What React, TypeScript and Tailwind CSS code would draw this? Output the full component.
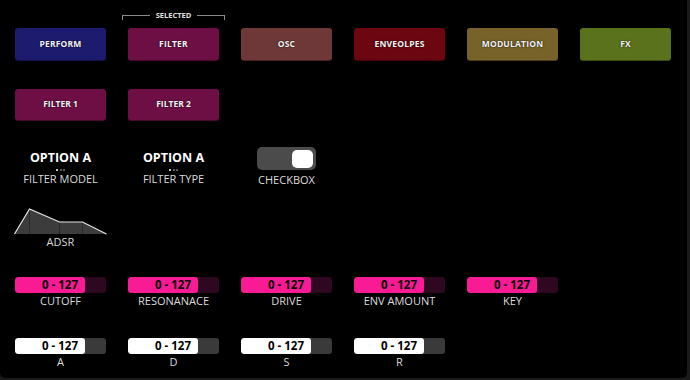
import React from "react";

type Btn = { label: string; color: string; edge: string };

const tabs: Btn[] = [
    { label: "PERFORM", color: "bg-[#1d1b6e]", edge: "shadow-[0_1px_0_#121048]" },
    { label: "FILTER", color: "bg-[#6d0f45]", edge: "shadow-[0_1px_0_#46082c]" },
    { label: "OSC", color: "bg-[#6e3838]", edge: "shadow-[0_1px_0_#482222]" },
    { label: "ENVEOLPES", color: "bg-[#6c0610]", edge: "shadow-[0_1px_0_#46030a]" },
    { label: "MODULATION", color: "bg-[#776229]", edge: "shadow-[0_1px_0_#4e3f18]" },
    { label: "FX", color: "bg-[#5a721b]", edge: "shadow-[0_1px_0_#3a4a10]" },
];

const pinkSliders = ["CUTOFF", "RESONANACE", "DRIVE", "ENV AMOUNT", "KEY"];
const whiteSliders = ["A", "D", "S", "R"];

const Button = ({ label, color, edge }: Btn) => (
    <div
        className={`flex h-[32px] items-center justify-center rounded-[3px] ${color} ${edge} text-[8.5px] font-bold tracking-[0.2px] text-[#f2f2f2] [text-shadow:0_0_2px_rgba(0,0,0,0.9)]`}
    >
        {label}
    </div>
);

const Slider = ({ label, white }: { label: string; white?: boolean }) => (
    <div className="flex flex-col items-center">
        <div
            className={`flex h-[16px] w-full overflow-hidden rounded-[3px] ${
                white ? "bg-[#3a3a3a]" : "bg-[#2e0820]"
            }`}
        >
            <div
                className={`flex w-[70px] items-center justify-end rounded-[3px] pr-[7px] text-[11.5px] font-bold text-black ${
                    white ? "bg-white" : "bg-[#f81b94]"
                }`}
            >
                0 - 127
            </div>
        </div>
        <div className="mt-[1px] text-[11px] leading-[14px] text-[#dcdcdc]">{label}</div>
    </div>
);

const Option = ({ label }: { label: string }) => (
    <div className="flex flex-col items-center pt-[3px]">
        <div className="text-[12.5px] font-bold leading-[16px] text-white">OPTION A</div>
        <div className="mt-[3px] flex gap-[1.5px]">
            <span className="h-[2px] w-[2px] rounded-full bg-white" />
            <span className="h-[2px] w-[2px] rounded-full bg-[#777]" />
            <span className="h-[2px] w-[2px] rounded-full bg-[#777]" />
        </div>
        <div className="mt-[1px] text-[11px] leading-[14px] text-[#dcdcdc]">{label}</div>
    </div>
);

export default function App() {
    return (
        <div className="h-[380px] w-[690px] bg-[#1a1a1a] font-['Open_Sans',sans-serif]">
            <div className="h-[378px] w-[687px] rounded-b-[5px] bg-black px-[15px]">
                <div className="grid grid-cols-[repeat(6,91px)] gap-x-[22px] pt-[11px]">
                    <div />
                    <div className="-mx-[6px] flex h-[17px] items-start">
                        <div className="mt-[4px] h-[5px] flex-1 border-l border-t border-[#8a8a8a]" />
                        <div className="px-[6px] text-[7.5px] font-bold leading-[9px] text-[#e0e0e0]">SELECTED</div>
                        <div className="mt-[4px] h-[5px] flex-1 border-r border-t border-[#8a8a8a]" />
                    </div>
                </div>

                <div className="grid grid-cols-[repeat(6,91px)] gap-x-[22px]">
                    {tabs.map((t) => (
                        <Button key={t.label} {...t} />
                    ))}
                </div>

                <div className="mt-[29px] grid grid-cols-[repeat(6,91px)] gap-x-[22px]">
                    <div className="flex h-[31px] items-center justify-center rounded-[3px] bg-[#6d0f45] text-[8.5px] font-bold text-[#f2f2f2] shadow-[0_1px_0_#46082c] [text-shadow:0_0_2px_rgba(0,0,0,0.9)]">
                        FILTER 1
                    </div>
                    <div className="flex h-[31px] items-center justify-center rounded-[3px] bg-[#6d0f45] text-[8.5px] font-bold text-[#f2f2f2] shadow-[0_1px_0_#46082c] [text-shadow:0_0_2px_rgba(0,0,0,0.9)]">
                        FILTER 2
                    </div>
                </div>

                <div className="mt-[27px] grid h-[41px] grid-cols-[repeat(6,91px)] gap-x-[22px]">
                    <Option label="FILTER MODEL" />
                    <Option label="FILTER TYPE" />
                    <div className="flex flex-col items-center">
                        <div className="flex h-[23px] w-[59px] items-center justify-end rounded-[5px] bg-[#4b4b4b] pr-[3px]">
                            <div className="h-[18px] w-[21px] rounded-[5px] bg-white" />
                        </div>
                        <div className="mt-[3px] text-[11px] leading-[14px] text-[#dcdcdc]">CHECKBOX</div>
                    </div>
                </div>

                <div className="mt-[20px] grid grid-cols-[repeat(6,91px)] gap-x-[22px]">
                    <div className="flex flex-col items-center">
                        <svg width="93" height="27" viewBox="0 0 93 27" className="block">
                            <polygon points="0.5,26 15.5,1 45.5,14 68.5,14 92.5,26" fill="#3c3c3c" />
                            <line x1="15.5" y1="1" x2="15.5" y2="26" stroke="#2a2a2a" strokeWidth="1" />
                            <line x1="45.5" y1="14" x2="45.5" y2="26" stroke="#2a2a2a" strokeWidth="1" />
                            <line x1="68.5" y1="14" x2="68.5" y2="26" stroke="#2a2a2a" strokeWidth="1" />
                            <polyline
                                points="0.5,26 15.5,1 45.5,14 68.5,14 92.5,26"
                                fill="none"
                                stroke="#e6e6e6"
                                strokeWidth="1.2"
                            />
                        </svg>
                        <div className="text-[11px] leading-[14px] text-[#dcdcdc]">ADSR</div>
                    </div>
                </div>

                <div className="mt-[28px] grid grid-cols-[repeat(6,91px)] gap-x-[22px]">
                    {pinkSliders.map((s) => (
                        <Slider key={s} label={s} />
                    ))}
                </div>

                <div className="mt-[30px] grid grid-cols-[repeat(6,91px)] gap-x-[22px]">
                    {whiteSliders.map((s) => (
                        <Slider key={s} label={s} white />
                    ))}
                </div>
            </div>
        </div>
    );
}
